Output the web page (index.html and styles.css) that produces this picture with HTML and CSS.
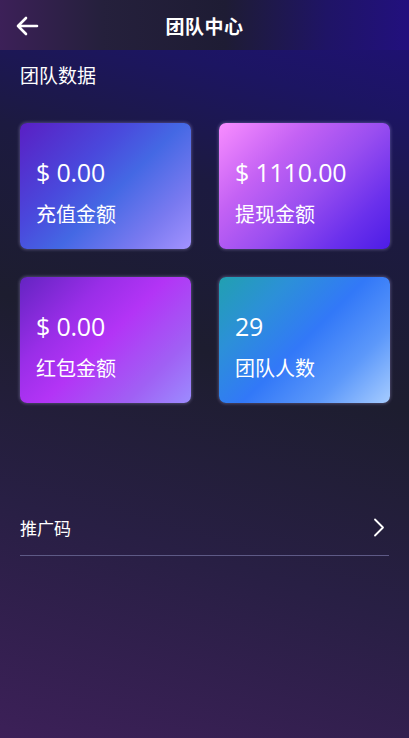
FILE: index.html
```html
<!DOCTYPE html>
<html lang="zh-CN">
<head>
<meta charset="utf-8">
<title>团队中心</title>
<link rel="stylesheet" href="styles.css">
</head>
<body>
<div class="page">
  <header class="topbar">
    <span class="back">
      <svg width="24" height="20" viewBox="0 0 24 20"><path d="M22 10H3M11 2L3 10l8 8" fill="none" stroke="#fff" stroke-width="2.6" stroke-linecap="round" stroke-linejoin="round"/></svg>
    </span>
    <h1 class="title">团队中心</h1>
    <span></span>
  </header>
  <h2 class="section-title">团队数据</h2>
  <div class="cards">
    <div class="card c1"><div class="num">$ 0.00</div><div class="label">充值金额</div></div>
    <div class="card c2"><div class="num">$ 1110.00</div><div class="label">提现金额</div></div>
    <div class="card c3"><div class="num">$ 0.00</div><div class="label">红包金额</div></div>
    <div class="card c4"><div class="num">29</div><div class="label">团队人数</div></div>
  </div>
  <div class="row">
    <span class="row-text">推广码</span>
    <svg class="chev" width="12" height="19" viewBox="0 0 12 19"><path d="M2 1.5l8 8-8 8" fill="none" stroke="#fff" stroke-width="1.8" stroke-linecap="round" stroke-linejoin="round"/></svg>
  </div>
</div>
</body>
</html>
```
FILE: styles.css
```css
html, body {
  margin: 0;
  padding: 0;
  height: 100%;
}
body {
  font-family: "Open Sans", "Noto Sans CJK SC", sans-serif;
  color: #fff;
  background: linear-gradient(196deg, #200f7c 0%, #1c1562 14%, #1c1a40 28%, #1d1d2f 48%, #281f44 72%, #3c2058 100%);
}
.page {
  min-height: 738px;
}
.topbar {
  height: 50px;
  display: grid;
  grid-template-columns: 56px 1fr 56px;
  align-items: center;
  background: linear-gradient(90deg, #3c2058 0%, #25203c 25%, #1e1c34 55%, #1f1466 80%, #22107e 100%);
}
.back {
  display: flex;
  padding-left: 15px;
  padding-top: 2px;
}
.title {
  margin: 0;
  text-align: center;
  font-size: 19px;
  font-weight: 700;
  font-family: "Noto Sans CJK SC", sans-serif;
  letter-spacing: 0.5px;
}
.section-title {
  margin: 12px 20px 0;
  font-size: 19px;
  font-weight: 400;
  line-height: 26px;
  font-family: "Noto Sans CJK SC", sans-serif;
}
.cards {
  margin-top: 35px;
  padding: 0 19px 0 20px;
  display: grid;
  grid-template-columns: 1fr 1fr;
  column-gap: 28px;
  row-gap: 28px;
}
.card {
  height: 126px;
  box-sizing: border-box;
  border-radius: 7px;
  padding: 34px 14px 0 16px;
  box-shadow: 0 0 3px 1px rgba(200, 190, 255, 0.28);
}
.num {
  font-size: 25px;
  line-height: 30px;
  letter-spacing: -0.2px;
}
.label {
  margin-top: 13px;
  font-size: 20px;
  line-height: 28px;
  font-family: "Noto Sans CJK SC", sans-serif;
}
.c1 { background: linear-gradient(135deg, #5a1fc4 0%, #4a48dc 35%, #4468e4 55%, #7a7af0 80%, #a393ff 100%); }
.c2 { background: linear-gradient(135deg, #f98dff 0%, #c462f4 30%, #9a4ef0 55%, #6a30ec 80%, #4c1ce6 100%); }
.c3 { background: linear-gradient(135deg, #6424c2 0%, #9a2ee8 30%, #b334f6 50%, #a060f4 78%, #9c8cff 100%); }
.c4 { background: linear-gradient(135deg, #21a0b0 0%, #2c90d8 25%, #3278f8 50%, #5c98fa 75%, #a6ccff 100%); }
.row {
  margin: 96px 20px 0;
  height: 57px;
  box-sizing: border-box;
  border-bottom: 1px solid #5e5a86;
  display: flex;
  align-items: center;
  justify-content: space-between;
  padding-right: 4px;
}
.row-text {
  font-size: 17px;
  font-family: "Noto Sans CJK SC", sans-serif;
}
.chev {
  display: block;
}
```
